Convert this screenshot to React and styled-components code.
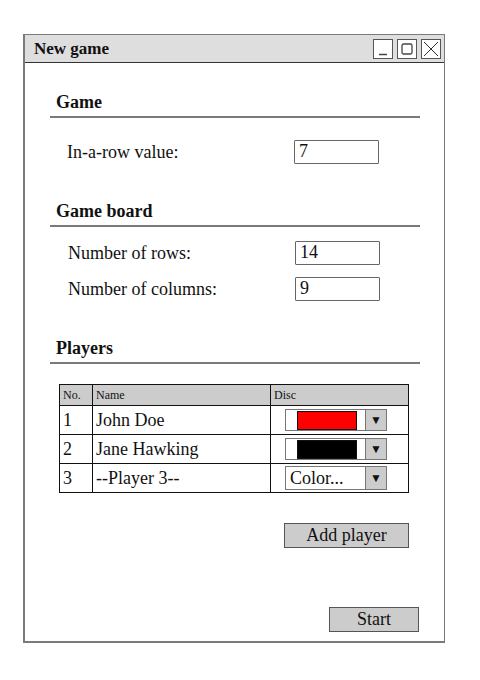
import React from 'react';
import styled, { createGlobalStyle } from 'styled-components';

const GlobalStyle = createGlobalStyle`
  body {
    margin: 0;
    background: #ffffff;
    font-family: "Liberation Serif", "Times New Roman", serif;
    color: #111;
  }
`;

const players = [
  { no: 1, name: 'John Doe', color: '#ff0000' },
  { no: 2, name: 'Jane Hawking', color: '#000000' },
  { no: 3, name: '--Player 3--', color: null },
];

function App() {
  return (
    <>
      <GlobalStyle />
      <StyledWindow>
        <StyledTitleBar>
          <span>New game</span>
          <StyledWindowButtons>
            <StyledWinButton>
              <svg width="18" height="18" viewBox="0 0 18 18">
                <path d="M5 14.5h8" stroke="#444" strokeWidth="1.5" />
              </svg>
            </StyledWinButton>
            <StyledWinButton>
              <svg width="18" height="18" viewBox="0 0 18 18">
                <rect x="4" y="4" width="10" height="10" rx="1.5" fill="none" stroke="#444" strokeWidth="1.3" />
              </svg>
            </StyledWinButton>
            <StyledWinButton>
              <svg width="18" height="18" viewBox="0 0 18 18">
                <path d="M2 2L16 16M16 2L2 16" stroke="#333" strokeWidth="1" />
              </svg>
            </StyledWinButton>
          </StyledWindowButtons>
        </StyledTitleBar>

        <StyledBody>
          <StyledHeading>Game</StyledHeading>
          <StyledFields $top={22}>
            <StyledField>
              <label>In-a-row value:</label>
              <StyledInput>7</StyledInput>
            </StyledField>
          </StyledFields>

          <StyledHeading $top={36}>Game board</StyledHeading>
          <StyledFields $top={14} $shift={1}>
            <StyledField>
              <label>Number of rows:</label>
              <StyledInput>14</StyledInput>
            </StyledField>
            <StyledField>
              <label>Number of columns:</label>
              <StyledInput>9</StyledInput>
            </StyledField>
          </StyledFields>

          <StyledHeading $top={36}>Players</StyledHeading>
          <StyledTable>
            <thead>
              <tr>
                <th>No.</th>
                <th>Name</th>
                <th>Disc</th>
              </tr>
            </thead>
            <tbody>
              {players.map((p) => (
                <tr key={p.no}>
                  <td>{p.no}</td>
                  <td>{p.name}</td>
                  <td>
                    <StyledDropdown $tall={!p.color}>
                      {p.color ? (
                        <StyledSwatchWrap>
                          <StyledSwatch style={{ background: p.color }} />
                        </StyledSwatchWrap>
                      ) : (
                        <StyledDropText>Color...</StyledDropText>
                      )}
                      <StyledArrow>▼</StyledArrow>
                    </StyledDropdown>
                  </td>
                </tr>
              ))}
            </tbody>
          </StyledTable>

          <StyledActions>
            <StyledButton $width={125} $right={11}>Add player</StyledButton>
            <StyledButton $width={90} $right={1} $top={59}>Start</StyledButton>
          </StyledActions>
        </StyledBody>
      </StyledWindow>
    </>
  );
}

const StyledWindow = styled.div`
  margin: 34px 0 0 23px;
  width: 422px;
  height: 609px;
  box-sizing: border-box;
  border: 1px solid #7a7a7a;
  border-left-width: 2px;
  border-bottom-width: 2px;
  display: flex;
  flex-direction: column;
`;

const StyledTitleBar = styled.div`
  height: 28px;
  box-sizing: border-box;
  background: #dedede;
  border-bottom: 1px solid #333;
  display: flex;
  align-items: center;
  justify-content: space-between;
  padding: 0 3px 0 9px;
  span {
    font-weight: bold;
    font-size: 17px;
  }
`;

const StyledWindowButtons = styled.div`
  display: flex;
  gap: 4px;
`;

const StyledWinButton = styled.div`
  width: 20px;
  height: 20px;
  box-sizing: border-box;
  border: 1px solid #555;
  background: #fff;
  display: flex;
  align-items: center;
  justify-content: center;
`;

const StyledBody = styled.div`
  padding: 28px 0 0 25px;
  width: 370px;
  display: flex;
  flex-direction: column;
`;

const StyledHeading = styled.div`
  margin-top: ${(p) => p.$top || 0}px;
  height: 25px;
  line-height: 23px;
  padding-left: 6px;
  font-size: 18px;
  font-weight: bold;
  border-bottom: 2px solid #7a7a7a;
`;

const StyledFields = styled.div`
  margin-top: ${(p) => p.$top}px;
  padding-left: ${(p) => 17 + (p.$shift || 0)}px;
  display: flex;
  flex-direction: column;
  gap: 12px;
`;

const StyledField = styled.div`
  display: grid;
  grid-template-columns: 227px 85px;
  align-items: center;
  font-size: 18px;
`;

const StyledInput = styled.div`
  height: 24px;
  box-sizing: border-box;
  border: 1px solid #666;
  border-radius: 1px;
  padding: 0 4px;
  line-height: 21px;
  font-size: 18px;
  background: #fff;
`;

const StyledTable = styled.table`
  margin: 20px 0 0 9px;
  width: 350px;
  border-collapse: collapse;
  table-layout: fixed;
  th, td {
    border: 1px solid #111;
    text-align: left;
    padding: 0 3px;
  }
  th {
    background: #cccccc;
    height: 20px;
    font-size: 12px;
    font-weight: normal;
  }
  th:nth-child(1) { width: 26px; }
  th:nth-child(2) { width: 171px; }
  td {
    height: 28px;
    font-size: 18px;
    vertical-align: middle;
  }
  td:nth-child(3) {
    padding-left: 14px;
  }
`;

const StyledDropdown = styled.div`
  width: 102px;
  height: ${(p) => (p.$tall ? 24 : 22)}px;
  box-sizing: border-box;
  border: 1px solid #777;
  background: #fff;
  display: flex;
`;

const StyledSwatchWrap = styled.div`
  flex: 1;
  padding: 0 8px 0 11px;
  display: flex;
  align-items: center;
`;

const StyledSwatch = styled.div`
  width: 100%;
  height: 19px;
  box-sizing: border-box;
  border: 1px solid #111;
`;

const StyledDropText = styled.div`
  flex: 1;
  padding-left: 4px;
  font-size: 18px;
  line-height: 22px;
`;

const StyledArrow = styled.div`
  width: 20px;
  background: #cccccc;
  border-left: 1px solid #777;
  display: flex;
  align-items: center;
  justify-content: center;
  font-size: 12px;
`;

const StyledActions = styled.div`
  margin-top: 30px;
  display: flex;
  flex-direction: column;
  align-items: flex-end;
`;

const StyledButton = styled.div`
  margin-top: ${(p) => p.$top || 0}px;
  margin-right: ${(p) => p.$right}px;
  width: ${(p) => p.$width}px;
  height: 25px;
  box-sizing: border-box;
  border: 1px solid #555;
  background: #cccccc;
  font-size: 18px;
  display: flex;
  align-items: center;
  justify-content: center;
`;

export default App;
